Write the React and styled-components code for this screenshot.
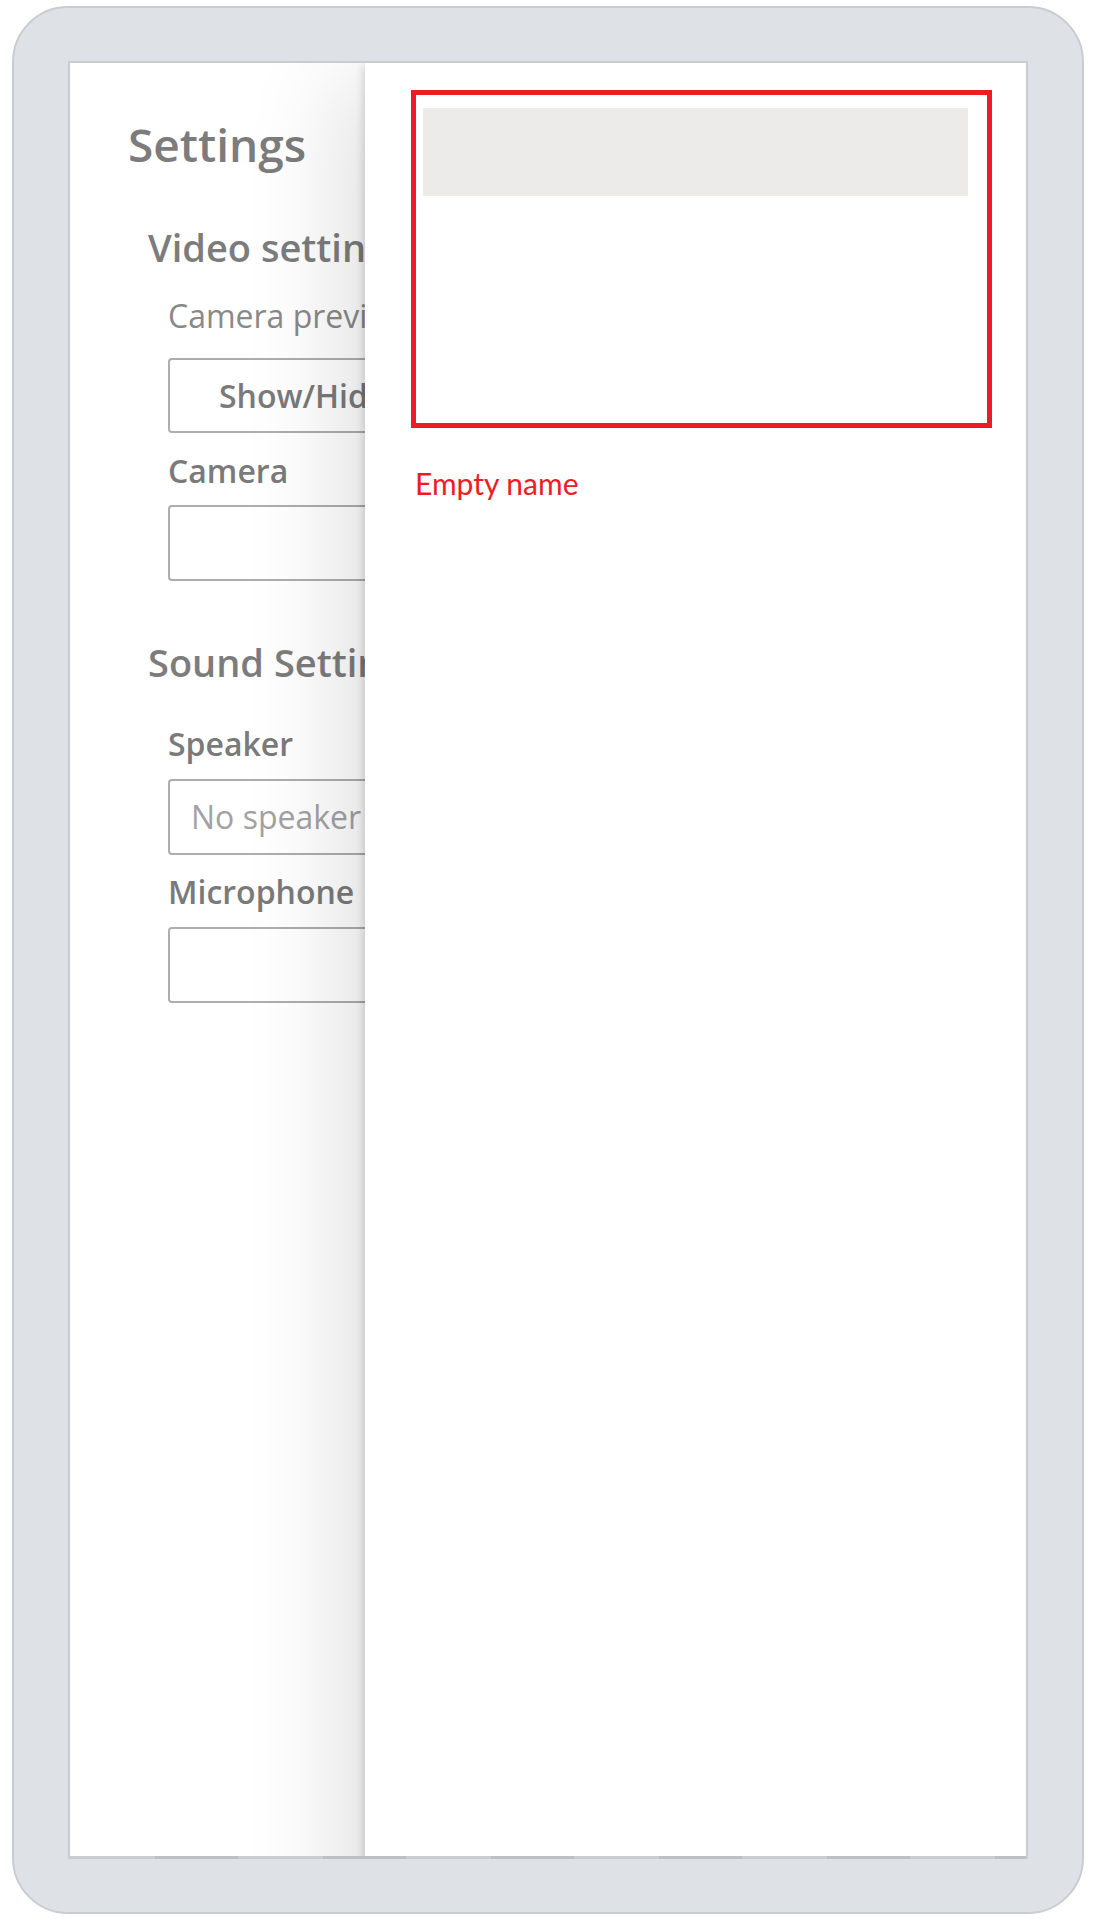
import React from 'react';
import styled, { createGlobalStyle } from 'styled-components';

const GlobalStyle = createGlobalStyle`
  html, body {
    margin: 0;
    padding: 0;
    background: #ffffff;
  }
  * {
    box-sizing: border-box;
  }
`;

const DeviceFrame = styled.div`
  width: 1072px;
  height: 1908px;
  margin: 6px 0 0 12px;
  padding: 53px 54px;
  background: #dee1e6;
  border: 2px solid #c9cdd2;
  border-radius: 56px;
`;

const Screen = styled.div`
  height: 100%;
  display: flex;
  flex-direction: column;
  background: #ffffff;
  border: 2px solid #c9cdd2;
  border-bottom: none;
`;

const Viewport = styled.div`
  position: relative;
  flex: 1;
  overflow: hidden;
`;

const TabStrip = styled.div`
  height: 3px;
  background: repeating-linear-gradient(
    to right,
    #c9ccd1 0,
    #c9ccd1 85px,
    #bcc0c5 85px,
    #bcc0c5 168px
  );
`;

const SettingsPage = styled.div`
  padding: 58px 0 0 58px;
  font-family: "Open Sans", "Noto Sans", sans-serif;
  color: #7c7c7c;
`;

const PageTitle = styled.h1`
  margin: 0;
  font-size: 46px;
  line-height: 1;
  font-weight: 600;
  white-space: nowrap;
`;

const Section = styled.section`
  padding-left: 20px;
`;

const SectionTitle = styled.h2`
  margin: ${p => p.$top}px 0 0;
  font-size: 38px;
  line-height: 1;
  font-weight: 600;
  white-space: nowrap;
`;

const Fields = styled.div`
  padding-left: 20px;
`;

const FieldLabel = styled.div`
  margin-top: ${p => p.$top}px;
  font-size: 32px;
  line-height: 1;
  font-weight: ${p => (p.$light ? 400 : 600)};
  color: ${p => (p.$light ? '#898989' : '#7a7a7a')};
  white-space: nowrap;
`;

const Control = styled.div`
  margin-top: ${p => p.$top}px;
  width: 640px;
  height: ${p => p.$height || 76}px;
  display: flex;
  align-items: center;
  padding-left: ${p => (p.$button ? 49 : 21)}px;
  border: 2px solid #adadad;
  border-radius: 4px;
  background: #ffffff;
  font-size: 32px;
  line-height: 1;
  font-weight: ${p => (p.$button ? 600 : 400)};
  color: ${p => (p.$button ? '#7a7a7a' : '#a2a2a2')};
  white-space: nowrap;
`;

const SidePanel = styled.aside`
  position: absolute;
  top: 0;
  bottom: -150px;
  left: 295px;
  right: 0;
  padding: 27px 0 0 46px;
  background: #ffffff;
  box-shadow:
    -5px 0 7px -2px rgba(0, 0, 0, 0.12),
    -40px 0 90px -14px rgba(0, 0, 0, 0.12);
`;

const NameFrame = styled.div`
  width: 581px;
  height: 338px;
  padding: 13px 19px 0 7px;
  border: 5px solid #ed1c24;
`;

const NameBar = styled.div`
  height: 88px;
  background: #ecebe9;
`;

const ErrorText = styled.div`
  margin: 40px 0 0 4px;
  font-family: Lato, "Liberation Sans", sans-serif;
  font-size: 30px;
  line-height: 1;
  color: #ee1c25;
`;

export default function App() {
  return (
    <>
      <GlobalStyle />
      <DeviceFrame>
        <Screen>
          <Viewport>
            <SettingsPage>
              <PageTitle>Settings</PageTitle>

              <Section>
                <SectionTitle $top={61}>Video settings</SectionTitle>
                <Fields>
                  <FieldLabel $top={34} $light>Camera preview</FieldLabel>
                  <Control $top={26} $height={75} $button>Show/Hide preview</Control>
                  <FieldLabel $top={22}>Camera</FieldLabel>
                  <Control $top={18} />
                </Fields>
              </Section>

              <Section>
                <SectionTitle $top={62}>Sound Settings</SectionTitle>
                <Fields>
                  <FieldLabel $top={47}>Speaker</FieldLabel>
                  <Control $top={19}>No speaker</Control>
                  <FieldLabel $top={21}>Microphone</FieldLabel>
                  <Control $top={19} />
                </Fields>
              </Section>
            </SettingsPage>

            <SidePanel>
              <NameFrame>
                <NameBar />
              </NameFrame>
              <ErrorText>Empty name</ErrorText>
            </SidePanel>
          </Viewport>
          <TabStrip />
        </Screen>
      </DeviceFrame>
    </>
  );
}
